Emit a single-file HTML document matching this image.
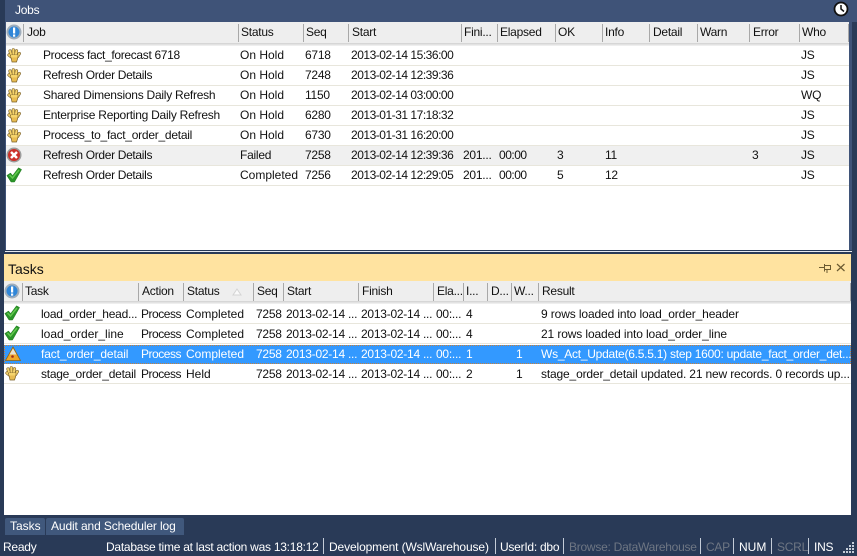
<!DOCTYPE html>
<html><head><meta charset="utf-8"><style>
html,body{margin:0;padding:0;background:#293a57}
#p{position:relative;width:857px;height:556px;overflow:hidden;background:#293a57;font:12px/16px "Liberation Sans",sans-serif;color:#111;letter-spacing:-.25px}
#p div,#p span,#p svg{position:absolute}
#p span{white-space:nowrap}
#p .z{letter-spacing:0}
#p .p{letter-spacing:-.48px}
#p .d{letter-spacing:-.48px}
#p .t{letter-spacing:-.12px}
#p .n{letter-spacing:-.33px}
.hd{background:#eeeeee}
.hs{background:linear-gradient(#d0d0d0,#f4f4f4)}
.sep{width:1px;height:18px;background:#a8a8a8}
.r{left:0;height:19px;border-bottom:1px solid #e8e6dc}
.r span{top:2px}
.j span{top:1px}
.h span{top:2px}
.st{color:#fff;top:539px}
.sd{top:538px;width:1px;height:16px;background:#c4ccd8}
</style></head><body><div id="p">
<svg width="0" height="0"><defs>
<symbol id="hand" viewBox="0 0 16 16"><g fill="none" stroke-linecap="round"><g stroke="#7a5f28" stroke-width="3.200"><path d="M5.500 9 L4 4"/><path d="M7.500 8 L7.300 2.800"/><path d="M9.800 8 L10.500 3.800"/><path d="M11.500 9.500 L13.300 6.500"/><path d="M5.500 10 L3 8"/></g><g stroke="#f6d46c" stroke-width="2"><path d="M5.500 9 L4 4"/><path d="M7.500 8 L7.300 2.800"/><path d="M9.800 8 L10.500 3.800"/><path d="M11.500 9.500 L13.300 6.500"/><path d="M5.500 10 L3 8"/></g></g><path d="M4.500 8 H12 L11.500 12 L10.500 15 H6 Z" fill="#e8bc52" stroke="#7a5f28" stroke-width=".7"/><path d="M5 8 H11.700 V10.500 H5 Z" fill="#f6d46c"/></symbol>
<symbol id="chk" viewBox="0 0 16 16"><path d="M.8 8.500 L4.500 6 L6.700 8.500 L12.500 .8 L15.600 2.500 L8.500 15 L5 15 Z" fill="#2a9428" stroke="#237a22" stroke-width=".5"/><path d="M3.500 8 L6.500 11 L13 3" fill="none" stroke="#62c84e" stroke-width="1.500"/></symbol>
<symbol id="err" viewBox="0 0 16 16"><circle cx="8" cy="8" r="7.500" fill="#9c9c9c"/><circle cx="8" cy="8" r="6" fill="#cc3028"/><path d="M5 5 L11 11 M11 5 L5 11" stroke="#fff" stroke-width="2.500"/></symbol>
<symbol id="warn" viewBox="0 0 16 16"><path d="M8 1 L15.500 14.500 L.5 14.500 Z" fill="#f0a828" stroke="#8f6414" stroke-width=".8"/><path d="M8 2.500 L11.500 8.500 L4.500 8.500 Z" fill="#e8e2d0"/><circle cx="7.500" cy="10.500" r="1.300" fill="#a02a1c"/></symbol>
<symbol id="info" viewBox="0 0 16 16"><circle cx="8" cy="8" r="7.500" fill="#9fadbb"/><circle cx="8" cy="8" r="5.500" fill="#2f86d8"/><rect x="7" y="3.500" width="2.200" height="6" fill="#fff"/><rect x="7" y="10.500" width="2.200" height="2.200" fill="#fff"/></symbol>
</defs></svg>

<!-- Jobs -->
<div style="left:5px;top:0;width:852px;height:22px;background:#3f5378"></div>
<div style="left:5px;top:22px;width:847px;height:232px;background:#3f5378"></div>
<span style="left:15px;top:2px;color:#fff">Jobs</span>
<svg style="left:833px;top:1px" width="16" height="16" viewBox="0 0 16 16"><circle cx="8" cy="8" r="6.500" fill="#fff" stroke="#111" stroke-width="1.800"/><path d="M8 4 V8 L11 10.500" fill="none" stroke="#111" stroke-width="1.500"/></svg>
<div style="left:6px;top:22px;width:843px;height:228px;background:#fff"></div>
<div class="hd h" style="left:6px;top:22px;width:843px;height:21px">
<span style="left:21px">Job</span><span style="left:235px">Status</span><span style="left:300px">Seq</span><span style="left:346px">Start</span><span style="left:458px">Fini...</span><span style="left:494px">Elapsed</span><span style="left:552px">OK</span><span style="left:599px">Info</span><span style="left:647px">Detail</span><span style="left:694px">Warn</span><span style="left:747px">Error</span><span style="left:796px">Who</span>
</div>
<div class="hs" style="left:6px;top:43px;width:843px;height:3px"></div>
<div class="sep" style="left:23px;top:24px"></div><div class="sep" style="left:238px;top:24px"></div><div class="sep" style="left:303px;top:24px"></div><div class="sep" style="left:348px;top:24px"></div><div class="sep" style="left:461px;top:24px"></div><div class="sep" style="left:497px;top:24px"></div><div class="sep" style="left:555px;top:24px"></div><div class="sep" style="left:602px;top:24px"></div><div class="sep" style="left:649px;top:24px"></div><div class="sep" style="left:697px;top:24px"></div><div class="sep" style="left:749px;top:24px"></div><div class="sep" style="left:799px;top:24px"></div><div class="sep" style="left:848px;top:24px"></div>
<svg style="left:6px;top:24px" width="16" height="16"><use href="#info"/></svg>

<div class="r j" style="top:46px;left:6px;width:843px"><span class="n" style="left:37px">Process fact_forecast 6718</span><span class="z" style="left:234px">On Hold</span><span style="left:299px">6718</span><span class="d" style="left:345px">2013-02-14 15:36:00</span><span style="left:795px">JS</span></div>
<div class="r j" style="top:66px;left:6px;width:843px"><span class="n" style="left:37px">Refresh Order Details</span><span class="z" style="left:234px">On Hold</span><span style="left:299px">7248</span><span class="d" style="left:345px">2013-02-14 12:39:36</span><span style="left:795px">JS</span></div>
<div class="r j" style="top:86px;left:6px;width:843px"><span style="left:37px">Shared Dimensions Daily Refresh</span><span class="z" style="left:234px">On Hold</span><span style="left:299px">1150</span><span class="d" style="left:345px">2013-02-14 03:00:00</span><span style="left:795px">WQ</span></div>
<div class="r j" style="top:106px;left:6px;width:843px"><span style="left:37px">Enterprise Reporting Daily Refresh</span><span class="z" style="left:234px">On Hold</span><span style="left:299px">6280</span><span class="d" style="left:345px">2013-01-31 17:18:32</span><span style="left:795px">JS</span></div>
<div class="r j" style="top:126px;left:6px;width:843px"><span style="left:37px">Process_to_fact_order_detail</span><span class="z" style="left:234px">On Hold</span><span style="left:299px">6730</span><span class="d" style="left:345px">2013-01-31 16:20:00</span><span style="left:795px">JS</span></div>
<div class="r j" style="top:146px;left:6px;width:843px;background:#f0f0f0"><span class="n" style="left:37px">Refresh Order Details</span><span style="left:234px">Failed</span><span style="left:299px">7258</span><span class="d" style="left:345px">2013-02-14 12:39:36</span><span style="left:457px">201...</span><span class="d" style="left:493px">00:00</span><span style="left:551px">3</span><span style="left:599px">11</span><span style="left:746px">3</span><span style="left:795px">JS</span></div>
<div class="r j" style="top:166px;left:6px;width:843px"><span class="n" style="left:37px">Refresh Order Details</span><span class="z" style="left:234px">Completed</span><span style="left:299px">7256</span><span class="d" style="left:345px">2013-02-14 12:29:05</span><span style="left:457px">201...</span><span class="d" style="left:493px">00:00</span><span style="left:551px">5</span><span style="left:599px">12</span><span style="left:795px">JS</span></div>
<svg style="left:6px;top:47px" width="16" height="16"><use href="#hand"/></svg>
<svg style="left:6px;top:67px" width="16" height="16"><use href="#hand"/></svg>
<svg style="left:6px;top:87px" width="16" height="16"><use href="#hand"/></svg>
<svg style="left:6px;top:107px" width="16" height="16"><use href="#hand"/></svg>
<svg style="left:6px;top:127px" width="16" height="16"><use href="#hand"/></svg>
<svg style="left:6px;top:147px" width="16" height="16"><use href="#err"/></svg>
<svg style="left:6px;top:167px" width="16" height="16"><use href="#chk"/></svg>

<!-- Tasks -->
<div style="left:5px;top:250px;width:847px;height:4px;background:#293a57"></div>
<div style="left:5px;top:251px;width:847px;height:1px;background:#e6e9ee"></div>
<div style="left:4px;top:254px;width:847px;height:27px;background:#ffe3a0"></div>
<span class="z" style="left:8px;top:261px;font-size:14px">Tasks</span>
<svg style="left:818px;top:262px" width="28" height="12" viewBox="0 0 28 12"><path d="M1 5.500 H6 M6.500 3.500 H12.500 V7.500 H6.500 Z M6.500 2 V9.500 M9 8 V11" fill="none" stroke="#6b5a30"/><path d="M19 2 L26.500 9 M26.500 2 L19 9" stroke="#6b5a30" stroke-width="1.200"/></svg>
<div style="left:4px;top:281px;width:847px;height:234px;background:#fff"></div>
<div class="hd h" style="left:4px;top:281px;width:847px;height:20px">
<span style="left:21px">Task</span><span style="left:138px">Action</span><span style="left:183px">Status</span><span style="left:253px">Seq</span><span style="left:283px">Start</span><span style="left:358px">Finish</span><span style="left:433px">Ela...</span><span style="left:462px">I...</span><span style="left:487px">D...</span><span style="left:510px">W...</span><span style="left:538px">Result</span>
</div>
<div class="hs" style="left:4px;top:301px;width:847px;height:3px"></div>
<svg style="left:232px;top:288px" width="10" height="8" viewBox="0 0 10 8"><path d="M5 1 L9 7 H1 Z" fill="#fafafa" stroke="#d4d4d4"/></svg>
<div class="sep" style="left:22px;top:283px"></div><div class="sep" style="left:138px;top:283px"></div><div class="sep" style="left:183px;top:283px"></div><div class="sep" style="left:253px;top:283px"></div><div class="sep" style="left:283px;top:283px"></div><div class="sep" style="left:358px;top:283px"></div><div class="sep" style="left:433px;top:283px"></div><div class="sep" style="left:463px;top:283px"></div><div class="sep" style="left:487px;top:283px"></div><div class="sep" style="left:511px;top:283px"></div><div class="sep" style="left:538px;top:283px"></div><div class="sep" style="left:850px;top:283px"></div>
<svg style="left:4px;top:283px" width="16" height="16"><use href="#info"/></svg>

<div class="r" style="top:304px;left:4px;width:847px"><span style="left:37px">load_order_head...</span><span class="p" style="left:137px">Process</span><span class="z" style="left:182px">Completed</span><span style="left:252px">7258</span><span style="left:282px">2013-02-14 ...</span><span style="left:357px">2013-02-14 ...</span><span style="left:432px">00:...</span><span style="left:462px">4</span><span class="t" style="left:537px">9 rows loaded into load_order_header</span></div>
<div class="r" style="top:324px;left:4px;width:847px"><span class="z" style="left:37px">load_order_line</span><span class="p" style="left:137px">Process</span><span class="z" style="left:182px">Completed</span><span style="left:252px">7258</span><span style="left:282px">2013-02-14 ...</span><span style="left:357px">2013-02-14 ...</span><span style="left:432px">00:...</span><span style="left:462px">4</span><span class="t" style="left:537px">21 rows loaded into load_order_line</span></div>
<div class="r" style="top:345px;left:4px;width:847px;height:19px;background:#3399ff;border:0;color:#fff;outline:1px dotted #c8803a;outline-offset:-1px"><span class="t" style="left:37px;top:1px">fact_order_detail</span><span class="p" style="left:137px;top:1px">Process</span><span class="z" style="left:182px;top:1px">Completed</span><span style="left:252px;top:1px">7258</span><span style="left:282px;top:1px">2013-02-14 ...</span><span style="left:357px;top:1px">2013-02-14 ...</span><span style="left:432px;top:1px">00:...</span><span style="left:462px;top:1px">1</span><span style="left:512px;top:1px">1</span><span style="left:537px;top:1px">Ws_Act_Update(6.5.5.1) step 1600: update_fact_order_det...</span></div>
<div class="r" style="top:364px;left:4px;width:847px"><span style="left:37px">stage_order_detail</span><span class="p" style="left:137px">Process</span><span class="z" style="left:182px">Held</span><span style="left:252px">7258</span><span style="left:282px">2013-02-14 ...</span><span style="left:357px">2013-02-14 ...</span><span style="left:432px">00:...</span><span style="left:462px">2</span><span style="left:512px">1</span><span class="t" style="left:537px;letter-spacing:-.16px">stage_order_detail updated. 21 new records. 0 records up...</span></div>
<svg style="left:4px;top:305px" width="16" height="16"><use href="#chk"/></svg>
<svg style="left:4px;top:325px" width="16" height="16"><use href="#chk"/></svg>
<svg style="left:5px;top:346px" width="16" height="16"><use href="#warn"/></svg>
<svg style="left:4px;top:365px" width="16" height="16"><use href="#hand"/></svg>

<!-- Tabs -->
<div style="left:5px;top:518px;width:40px;height:17px;background:#40587c;border-radius:2px 2px 0 0"></div>
<div style="left:46px;top:518px;width:138px;height:17px;background:#40587c;border-radius:2px 2px 0 0"></div>
<span class="z" style="left:10px;top:518px;color:#fff">Tasks</span>
<span class="t" style="left:51px;top:518px;color:#fff">Audit and Scheduler log</span>

<!-- Status -->
<span class="st" style="left:3px">Ready</span>
<span class="st" style="left:106px">Database time at last action was 13:18:12</span>
<div class="sd" style="left:323px"></div>
<span class="st t" style="left:329px">Development (WslWarehouse)</span>
<div class="sd" style="left:495px"></div>
<span class="st" style="left:500px">UserId: dbo</span>
<div class="sd" style="left:563px"></div>
<span class="st" style="left:569px;color:#6e7683">Browse: DataWarehouse</span>
<div class="sd" style="left:700px"></div>
<span class="st" style="left:706px;color:#6e7683">CAP</span>
<div class="sd" style="left:733px"></div>
<span class="st z" style="left:739px">NUM</span>
<div class="sd" style="left:771px"></div>
<span class="st" style="left:777px;color:#6e7683">SCRL</span>
<div class="sd" style="left:808px"></div>
<span class="st" style="left:814px">INS</span>
<svg style="left:843px;top:542px" width="12" height="11" fill="#c4ccd8"><rect x="9" y="0" width="2" height="2"/><rect x="6" y="3" width="2" height="2"/><rect x="9" y="3" width="2" height="2"/><rect x="3" y="6" width="2" height="2"/><rect x="6" y="6" width="2" height="2"/><rect x="9" y="6" width="2" height="2"/><rect x="0" y="9" width="2" height="2"/><rect x="3" y="9" width="2" height="2"/><rect x="6" y="9" width="2" height="2"/><rect x="9" y="9" width="2" height="2"/></svg>
</div></body></html>
